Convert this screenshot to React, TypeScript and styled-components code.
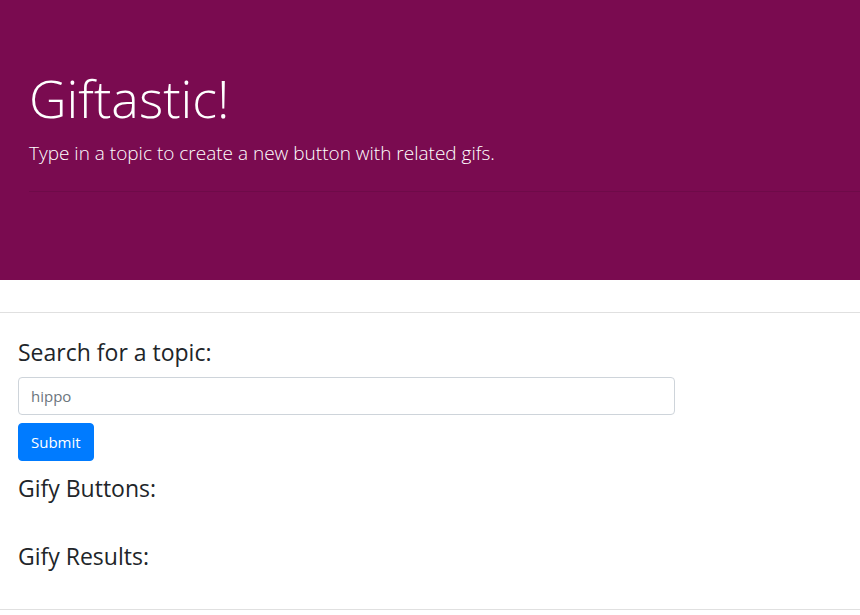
import React from "react";
import styled, { createGlobalStyle } from "styled-components";

const GlobalStyle = createGlobalStyle`
  *, *::before, *::after { box-sizing: border-box; }
  body {
    margin: 0;
    background: #fff;
    color: #212529;
    font: 400 15px/24px "Open Sans", sans-serif;
  }
`;

const Hero = styled.header`
  padding: 64px 0 64px 29px;
  background: #7a0b50;
  color: #fff;
`;

const Title = styled.h1`
  margin: 0 0 7px;
  font-size: 52px;
  font-weight: 300;
  line-height: 68px;
`;

const Lead = styled.p`
  margin: 0;
  font-size: 19px;
  font-weight: 300;
  line-height: 28px;
`;

const HeroRule = styled.hr`
  margin: 24px 0;
  border: 0;
  border-top: 1px solid #6e0a48;
`;

const Rule = styled.hr`
  margin: 32px 0 24px;
  border: 0;
  border-top: 1px solid #e0e0e0;
`;

const Main = styled.main`
  padding: 0 21px 0 18px;
`;

const SearchForm = styled.form`
  width: 80%;
`;

const SearchLabel = styled.label`
  display: block;
  margin-bottom: 10px;
  font-size: 23px;
  line-height: 30px;
`;

const Heading = styled.h2`
  margin: 12px 0 38px;
  font-size: 23px;
  font-weight: 400;
  line-height: 30px;
`;

const SearchInput = styled.input`
  display: block;
  width: 100%;
  height: 38px;
  margin-bottom: 8px;
  padding: 6px 12px;
  border: 1px solid #ced4da;
  border-radius: 4px;
  background: #fff;
  color: #495057;
  font: inherit;
  &::placeholder { color: #6c757d; opacity: 1; }
`;

const SubmitButton = styled.button`
  display: block;
  height: 38px;
  padding: 6px 12px;
  border: 1px solid #007bff;
  border-radius: 4px;
  background: #007bff;
  color: #fff;
  font: inherit;
`;

export default function App() {
  return (
    <>
      <GlobalStyle />
      <Hero>
        <Title>Giftastic!</Title>
        <Lead>Type in a topic to create a new button with related gifs.</Lead>
        <HeroRule />
      </Hero>
      <Rule />
      <Main>
        <SearchForm onSubmit={(event) => event.preventDefault()}>
          <SearchLabel htmlFor="topic">Search for a topic:</SearchLabel>
          <SearchInput id="topic" type="text" placeholder="hippo" />
          <SubmitButton type="submit">Submit</SubmitButton>
        </SearchForm>
        <Heading>Gify Buttons:</Heading>
        <Heading>Gify Results:</Heading>
      </Main>
      <Rule />
    </>
  );
}
